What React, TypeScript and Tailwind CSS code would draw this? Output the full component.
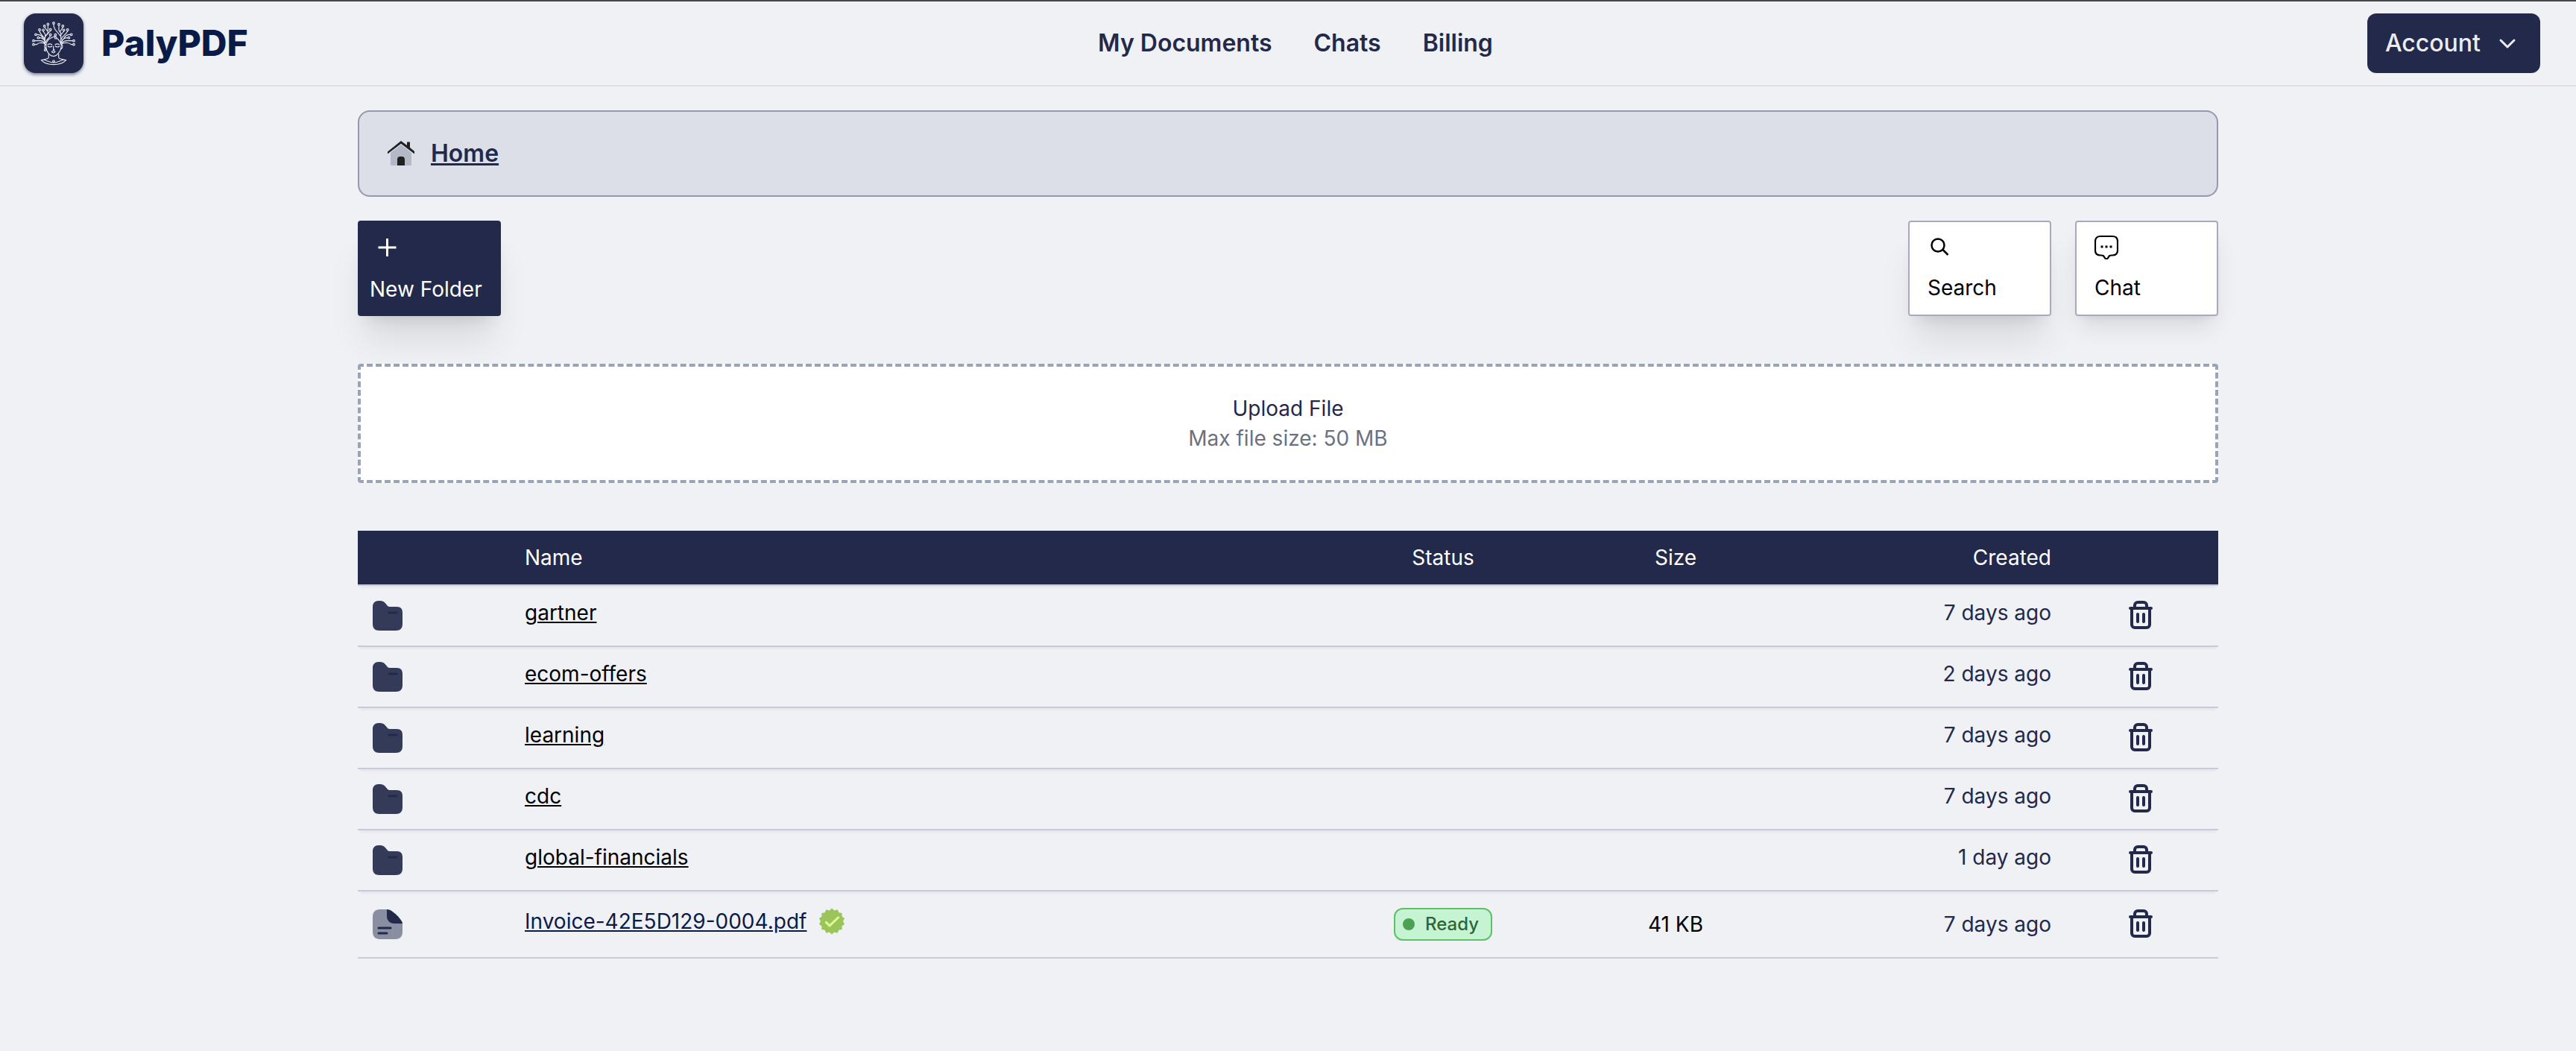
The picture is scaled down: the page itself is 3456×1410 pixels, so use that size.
import React from "react";

const NAVY = "#23294b";

function Logo() {
  const nodes: [number, number][] = [
    [126, 45], [103, 49], [89, 57], [69, 72], [84, 73], [113, 71], [147, 50], [163, 57], [167, 73], [182, 72],
    [54, 91], [197, 91], [64, 104], [187, 104], [45, 116], [45, 131], [207, 116], [207, 131],
    [113, 92], [133, 92], [134, 104], [92, 153],
  ];
  return (
    <svg viewBox="6 6 240 240" className="size-20" fill="none" stroke="#e7e8ee" strokeWidth="3.500" strokeLinecap="round" strokeLinejoin="round" aria-hidden="true">
      <path d="M103 54v30l-12 16v32M89 62l13 16M113 76l-20 22M84 78l8 12v12M69 77c3 16 18 20 22 34M59 91c14 0 20 6 24 14 4 7 8 10 8 18M69 104c8 0 14 3 20 10M50 116h24c8 0 12 4 16 10M50 131h8c6-8 24-9 33-2M113 97l-15 17-5 10" />
      <path d="M147 55v19l8 12v44M126 50c0 14 4 20 12 28l18 22M163 62l-10 16M167 78l-10 12M182 77c-6 14-20 18-25 32M192 91c-14 0-20 6-24 14-4 7-10 10-10 18M182 104c-8 0-16 3-22 10M202 116h-24c-8 0-14 4-19 10M202 131h-6c-6-8-26-9-38-2M133 97l-18 8c-10 5-18 12-20 28M138 106c10 6 14 12 17 24" />
      <path d="M95 130c0 20 4 30 10 36 6 8 12 12 20 12s14-4 20-12c6-6 12-16 12-36M91 132c-4 6-1 14 5 18M160 132c4 6 1 14-5 18M102 132c5-4 12-4 17 0M132 132c5-4 12-4 17 0M103 138c4 4 12 4 16 0M133 138c4 4 12 4 16 0M125 138v12c-2 4 4 4 4 1M118 160c4-4 10-4 14 0-3 6-11 6-14 0zM92 148v-6" />
      <path d="M106 170v12c0 8-14 8-30 12 12 13 30 18 50 18s38-5 50-18c-16-4-30-4-30-12v-12M84 192c12 2 26 12 42 12s30-10 42-12" />
      <circle cx="126" cy="199" r="4" />
      {nodes.map(([x, y]) => (
        <circle key={`${x}-${y}`} cx={x} cy={y} r="4" />
      ))}
    </svg>
  );
}

function HomeIcon() {
  return (
    <svg viewBox="0 0 36 36" className="size-9" aria-hidden="true">
      <path d="M4 17 18 6l14 11v15.500a1.500 1.500 0 0 1-1.500 1.500h-25A1.500 1.500 0 0 1 4 32.500z" fill="#b3b9c7" />
      <path d="M0 15.500 18 1l8 6V2.500h4V10l6 5v3.500L18 4.800 0 18.500z" fill="#212121" />
      <path d="M13 34v-8a4 4 0 0 1 4-4h2a4 4 0 0 1 4 4v8z" fill="#212121" />
    </svg>
  );
}

function FolderIcon() {
  return (
    <svg viewBox="0 0 40 40" className="size-10" aria-hidden="true">
      <path d="M0 8C0 3 3 0 8 0c6 0 7 1 10 4.500 2 2.500 2.500 3.500 5 3.500h9c6 0 8 3 8 8v15c0 6-3 9-9 9H9c-6 0-9-3-9-9z" fill="#333b59" />
      <path d="M22 16h10" stroke={NAVY} strokeWidth="3" strokeLinecap="round" />
    </svg>
  );
}

function FileIcon() {
  return (
    <svg viewBox="0 0 40 40" className="size-10" aria-hidden="true">
      <path d="M19 0H10C3 0 0 4 0 10v20c0 6 3 10 10 10h20c7 0 10-4 10-10V19z" fill="#898ea1" />
      <path d="M19 0c3 0 5 1 7 2.500C32 7 36 11 39 16c.7 1 1 2 1 3H29c-6 0-10-4-10-10z" fill={NAVY} />
      <path d="M8 25h16M8 32h11" stroke={NAVY} strokeWidth="3" strokeLinecap="round" />
    </svg>
  );
}

function TrashIcon() {
  return (
    <svg viewBox="0 0 32 38" className="h-[38px] w-8" fill="none" stroke={NAVY} strokeWidth="4" strokeLinecap="round" strokeLinejoin="round" aria-hidden="true">
      <path d="M2 10h28M4 10v22a4 4 0 0 0 4 4h16a4 4 0 0 0 4-4V10M8 10V6a4 4 0 0 1 4-4h8a4 4 0 0 1 4 4v4M12 18v10M20 18v10" />
    </svg>
  );
}

function VerifiedIcon() {
  const points = Array.from({ length: 28 }, (_, i) => {
    const angle = (i * Math.PI) / 14 - Math.PI / 2;
    const radius = i % 2 === 0 ? 17.500 : 15;
    return `${18 + radius * Math.cos(angle)},${18 + radius * Math.sin(angle)}`;
  }).join(" ");
  return (
    <svg viewBox="0 0 36 36" className="size-9" aria-label="Verified" role="img">
      <polygon points={points} fill="#9bc55b" />
      <path d="M9.500 18.500l5.500 5.500L27.500 12" fill="none" stroke="#dcff97" strokeWidth="3" />
    </svg>
  );
}

type Row = { name: string; created: string; file?: boolean; status?: string; size?: string };

const rows: Row[] = [
  { name: "gartner", created: "7 days ago" },
  { name: "ecom-offers", created: "2 days ago" },
  { name: "learning", created: "7 days ago" },
  { name: "cdc", created: "7 days ago" },
  { name: "global-financials", created: "1 day ago" },
  { name: "Invoice-42E5D129-0004.pdf", created: "7 days ago", file: true, status: "Ready", size: "41 KB" },
];

function Header() {
  return (
    <header className="grid grid-cols-[1fr_auto_1fr] items-center border-t-2 border-b-2 border-t-[#48484b] border-b-[#dcdee8] pt-4 pr-12 pb-4 pl-8">
      <a href="#" className="flex items-center gap-6 justify-self-start">
        <span className="rounded-2xl bg-[#23294b] shadow-[0_2px_4px_#23294b99]">
          <Logo />
        </span>
        <span className="text-5xl font-extrabold text-[#0b1b48]">PalyPDF</span>
      </a>
      <nav className="ml-9 flex gap-14 text-[32px] leading-10 font-semibold">
        <a href="#">My Documents</a>
        <a href="#">Chats</a>
        <a href="#">Billing</a>
      </nav>
      <button type="button" className="flex h-20 items-center gap-6 justify-self-end rounded-xl bg-[#23294b] pr-8 pl-6 text-[32px] font-medium text-[#ececef]">
        Account
        <svg viewBox="0 0 24 24" className="size-6" fill="none" stroke="currentColor" strokeWidth="3" strokeLinecap="round" strokeLinejoin="round" aria-hidden="true">
          <path d="M3 8l9 9 9-9" />
        </svg>
      </button>
    </header>
  );
}

export default function App() {
  return (
    <div className="min-h-screen bg-[#eff1f5] font-[Inter,sans-serif] text-[28px] leading-10 text-[#23294b]">
      <Header />
      <main className="mx-auto w-full max-w-[2496px] pt-8">
        <nav aria-label="Breadcrumb" className="flex h-29 items-center gap-5.5 rounded-2xl border-2 border-[#9498af] bg-[#dcdee8] px-[38px]">
          <HomeIcon />
          <a href="#" className="text-[32px] font-semibold underline">Home</a>
        </nav>

        <div className="mt-8 flex gap-8">
          <button type="button" className="flex h-32 w-48 flex-col items-start justify-between rounded bg-[#23294b] px-4 pt-5 pb-4 text-white shadow-[0_40px_50px_-10px_#0000001a,0_16px_20px_-12px_#0000001a]">
            <svg viewBox="0 0 32 32" className="ml-2 size-8" stroke="currentColor" strokeWidth="3" aria-hidden="true">
              <path d="M15.500 4v24M3.500 16h24" />
            </svg>
            New Folder
          </button>
          <button type="button" className="ml-auto flex h-32 w-48 flex-col items-start justify-between rounded border-2 border-[#a7aabc] bg-white px-6 pt-4 pb-4 text-black shadow-[0_40px_50px_-10px_#0000001a,0_16px_20px_-12px_#0000001a]">
            <svg viewBox="0 0 32 32" className="size-8" fill="none" stroke="currentColor" strokeWidth="2.500" aria-hidden="true">
              <circle cx="14" cy="15" r="8.500" />
              <path d="M20 20.500l7.500 7.500" />
            </svg>
            Search
          </button>
          <button type="button" className="flex h-32 w-48 flex-col items-start justify-between rounded border-2 border-[#a7aabc] bg-white px-6 pt-4 pb-4 text-black shadow-[0_20px_30px_-6px_#0000001a,0_8px_12px_-8px_#0000001a]">
            <svg viewBox="0 0 32 34" className="h-[34px] w-8" fill="none" stroke="currentColor" strokeWidth="2.200" strokeLinejoin="round" aria-hidden="true">
              <path d="M8 3h16c4.500 0 7 2.500 7 7v12c0 4.500-2.500 6.500-7 6.500h-1c-3 0-3 .5-4.500 3-1.500 2.500-3.500 2.500-5 0-1.500-2.500-1.500-3-4.500-3H8c-4.500 0-7-2-7-6.500V10c0-4.500 2.500-7 7-7z" />
              <path d="M10 15.500v3M16 15.500v3M22 15.500v3" strokeWidth="3" />
            </svg>
            Chat
          </button>
        </div>

        <button type="button" className="mt-16 flex h-40 w-full flex-col items-center justify-center rounded border-4 border-dashed border-[#9aa4b8] bg-white">
          <span>Upload File</span>
          <span className="text-gray-500">Max file size: 50 MB</span>
        </button>

        <table className="mt-16 w-full table-fixed border-collapse">
          <colgroup>
            <col className="w-1/12" />
            <col />
            <col className="w-1/8" />
            <col className="w-1/8" />
            <col className="w-7/48" />
            <col className="w-1/12" />
          </colgroup>
          <thead>
            <tr className="h-[73px] border-b-2 border-[#c8c9da] bg-[#23294b] text-white shadow-[0_6px_4px_-3px_#0000000f]">
              <th />
              <th className="px-4 text-left font-normal">Name</th>
              <th className="px-4 font-normal">Status</th>
              <th className="px-4 font-normal">Size</th>
              <th className="px-4 text-right font-normal">Created</th>
              <th />
            </tr>
          </thead>
          <tbody>
            {rows.map((row) => (
              <tr key={row.name} className={row.file ? "h-[90px] border-b-2 border-[#c8c9da]" : "h-[82px] border-b-2 border-[#c8c9da] shadow-[0_6px_4px_-3px_#0000000f]"}>
                <td className="px-5">{row.file ? <FileIcon /> : <FolderIcon />}</td>
                <td className="px-4">
                  <div className="flex items-center gap-4 pb-2">
                    <a href="#" className={row.file ? "text-[#0b1b48] underline" : "text-black underline"}>{row.name}</a>
                    {row.file && <VerifiedIcon />}
                  </div>
                </td>
                <td className="px-4 text-center">
                  {row.status && (
                    <span className="inline-flex h-11 items-center gap-3.5 rounded-xl border-2 border-[#5cc168] bg-[#c6f4d2] pr-4 pl-2.5 align-middle text-2xl font-medium text-[#2f653b]">
                      <span className="size-4 rounded-full bg-[#4ca154]" />
                      {row.status}
                    </span>
                  )}
                </td>
                <td className="px-4 text-center text-black">{row.size}</td>
                <td className={row.file ? "px-4 text-right" : "px-4 pb-2 text-right"}>{row.created}</td>
                <td className="text-center">
                  <button type="button" aria-label={`Delete ${row.name}`} className="mx-auto flex pb-0.5">
                    <TrashIcon />
                  </button>
                </td>
              </tr>
            ))}
          </tbody>
        </table>
      </main>
    </div>
  );
}
